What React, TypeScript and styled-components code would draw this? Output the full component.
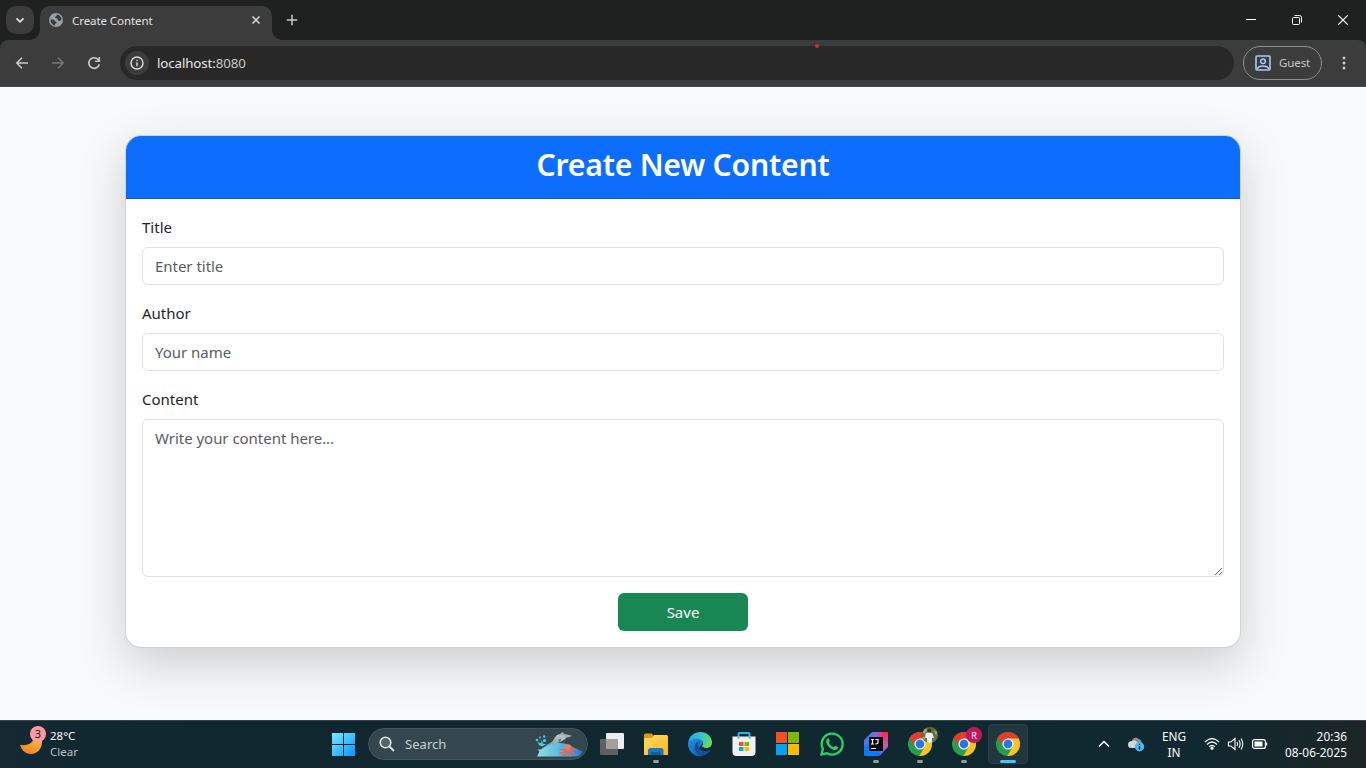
import React from "react";
import styled, { createGlobalStyle } from "styled-components";

const Global = createGlobalStyle`
  * { box-sizing: border-box; }
  body { margin: 0; overflow: hidden; font-family: "Noto Sans", "Open Sans", sans-serif; }
  svg { display: block; flex: none; overflow: visible; }
`;

const Screen = styled.div`
  width: 1366px;
  height: 768px;
  display: flex;
  flex-direction: column;
  overflow: hidden;
  background: #f8f9fa;
`;

/* browser window */
const TabStrip = styled.div`
  height: 40px;
  flex: none;
  display: flex;
  background: #1f2120;
  padding-left: 6px;
`;
const TabSearch = styled.div`
  width: 28px;
  height: 28px;
  margin-top: 6px;
  border-radius: 10px;
  background: #3c3c3c;
  display: grid;
  place-items: center;
`;
const Tab = styled.div`
  position: relative;
  width: 232px;
  height: 34px;
  margin: 6px 0 0 6px;
  padding: 0 9px 6px;
  border-radius: 10px 10px 0 0;
  background: #3c3c3c;
  display: flex;
  align-items: center;
  &::before, &::after {
    content: "";
    position: absolute;
    bottom: 0;
    width: 10px;
    height: 10px;
  }
  &::before { left: -10px; background: radial-gradient(circle at 0 0, transparent 9.5px, #3c3c3c 10px); }
  &::after { right: -10px; background: radial-gradient(circle at 100% 0, transparent 9.5px, #3c3c3c 10px); }
`;
const TabTitle = styled.span`
  flex: 1;
  margin-left: 9px;
  font-size: 11.5px;
  letter-spacing: -0.07px;
  color: #e3e3e3;
`;
const NewTab = styled.div`
  width: 40px;
  height: 40px;
  display: grid;
  place-items: center;
`;
const WindowButtons = styled.div`
  margin-left: auto;
  display: flex;
`;
const WindowButton = styled.div`
  width: 46px;
  height: 40px;
  display: grid;
  place-items: center;
`;
const Toolbar = styled.div`
  height: 47px;
  flex: none;
  display: flex;
  align-items: center;
  background: #3c3c3c;
  border-bottom: 1px solid #4a4a4a;
  border-radius: 8px 8px 0 0;
  padding-left: 4px;
`;
const ToolbarBack = styled.div`
  flex: none;
  background: #1f2120;
`;
const NavButton = styled.div`
  width: 36px;
  height: 36px;
  display: grid;
  place-items: center;
`;
const Omnibox = styled.div`
  position: relative;
  width: 1114px;
  height: 34px;
  margin-left: 8px;
  padding-left: 5px;
  border-radius: 17px;
  background: #282828;
  display: flex;
  align-items: center;
`;
const SiteInfo = styled.div`
  width: 24px;
  height: 24px;
  border-radius: 50%;
  background: #3c3c3c;
  display: grid;
  place-items: center;
`;
const Url = styled.span`
  margin-left: 8px;
  font-size: 13.3px;
  letter-spacing: -0.1px;
  color: #e8e8e8;
  span { color: #c7c7c7; }
`;
const RedDot = styled.i`
  position: absolute;
  left: 695px;
  top: -2px;
  width: 4px;
  height: 4px;
  border-radius: 50%;
  background: #d92626;
`;
const Guest = styled.div`
  width: 79px;
  height: 34px;
  margin-left: 9px;
  padding: 0 0 1px 11px;
  border: 1px solid #8e8e8e;
  border-radius: 17px;
  display: flex;
  align-items: center;
  gap: 8px;
  font-size: 11.5px;
  letter-spacing: -0.1px;
  color: #c7c7c7;
`;
const MenuButton = styled.div`
  width: 44px;
  display: grid;
  place-items: center;
`;

/* page */
const Page = styled.main`
  flex: 1;
  min-height: 0;
  overflow: hidden;
  background: #f8f9fa;
  padding-top: 48px;
`;
const Card = styled.section`
  width: 1116px;
  margin: 0 auto;
  border: 1px solid rgba(0, 0, 0, 0.175);
  border-radius: 16px;
  background: #fff;
  box-shadow: 0 16px 48px rgba(0, 0, 0, 0.175);
`;
const CardHeader = styled.header`
  height: 63px;
  padding-top: 9px;
  border-bottom: 1px solid rgba(0, 0, 0, 0.175);
  border-radius: 15px 15px 0 0;
  background: #0d6efd;
  text-align: center;
`;
const Heading = styled.h2`
  margin: 0;
  font-size: 30.2px;
  line-height: 40px;
  font-weight: 600;
  letter-spacing: -0.25px;
  color: #fff;
`;
const Form = styled.form`
  padding: 16px;
  display: flex;
  flex-direction: column;
  gap: 16px;
`;
const Field = styled.label`
  display: flex;
  flex-direction: column;
  gap: 8px;
  font-size: 15px;
  line-height: 24px;
  color: #212529;
`;
const control = `
  display: block;
  width: 100%;
  margin: 0;
  padding: 6px 12px;
  border: 1px solid #dee2e6;
  border-radius: 6px;
  background: #fff;
  font-family: inherit;
  font-size: 15px;
  line-height: 24px;
  letter-spacing: -0.03px;
  color: #212529;
  outline: none;
  &::placeholder { color: #595c5f; opacity: 1; }
`;
const Input = styled.input`
  ${control}
  height: 38px;
`;
const TextArea = styled.textarea`
  ${control}
  height: 158px;
  resize: vertical;
`;
const SaveButton = styled.button`
  align-self: center;
  width: 130px;
  height: 38px;
  padding: 0;
  border: 0;
  border-radius: 6px;
  background: #198754;
  color: #fff;
  font-family: inherit;
  font-size: 15px;
  line-height: 24px;
`;

/* taskbar */
const Taskbar = styled.footer`
  height: 48px;
  flex: none;
  display: flex;
  align-items: center;
  padding-bottom: 1px;
  background: linear-gradient(90deg, #142932 0%, #10272f 15%, #10282f 88%, #1d2627 100%);
  border-top: 1px solid #36474d;
`;
const Weather = styled.div`
  width: 321px;
  padding-left: 19px;
  display: flex;
  align-items: center;
  gap: 3px;
`;
const TwoLines = styled.div<{ $align?: string; $width?: number; $size?: number }>`
  width: ${(p) => (p.$width ? p.$width + "px" : "auto")};
  text-align: ${(p) => p.$align || "left"};
  font-size: ${(p) => p.$size || 11.5}px;
  line-height: 16px;
  white-space: nowrap;
  color: #fff;
`;
const Clock = styled(TwoLines)`
  letter-spacing: 0.05px;
`;
const Muted = styled.div`
  color: #b9c2c5;
`;
const AppCell = styled.div`
  position: relative;
  width: 44px;
  height: 46px;
  display: grid;
  place-items: center;
`;
const ActiveTile = styled.div`
  width: 40px;
  height: 40px;
  border-radius: 4px;
  border: 1px solid #2e4046;
  background: #22363d;
  display: grid;
  place-items: center;
`;
const Indicator = styled.i<{ $active?: boolean }>`
  position: absolute;
  bottom: 4px;
  left: ${(p) => (p.$active ? 14 : 19)}px;
  width: ${(p) => (p.$active ? 16 : 6)}px;
  height: 3px;
  border-radius: 2px;
  background: ${(p) => (p.$active ? "#4cc2f5" : "#949fa3")};
`;
const SearchBox = styled.div`
  width: 220px;
  height: 32px;
  margin: 0 2px 0 3px;
  padding: 0 3px 0 10px;
  border: 1px solid #43545b;
  border-radius: 16px;
  background: #34464e;
  display: flex;
  align-items: center;
  font-size: 13px;
  color: #c9d0d3;
  span { flex: 1; margin-left: 10px; letter-spacing: 0.05px; }
`;
const Badge = styled.div`
  position: absolute;
  right: 4px;
  top: 6px;
`;
const Tray = styled.div`
  margin-left: 66px;
  display: flex;
  align-items: center;
`;
const TrayCell = styled.div<{ $w: number }>`
  width: ${(p) => p.$w}px;
  display: grid;
  place-items: center;
`;
const StatusIcons = styled.div`
  width: 96px;
  padding-left: 16px;
  display: flex;
  align-items: center;
  gap: 7px;
`;

const Globe = () => (
  <svg width="14" height="14" viewBox="0 0 14 14">
    <circle cx="7" cy="7" r="7" fill="#9aa0a8" />
    <path d="M1.4 6.4H4C5.400 6.400 5.800 7.800 5.800 8.500H7.500V10.300L6 11V12.500C3.400 12 1.400 9.700 1.400 6.400ZM8.200 1.500C8 3 6.200 2.800 6.100 4.200 6 5.500 8 4.900 8.600 6.100 9 7.100 9 8 10.200 8 11.300 8 11.300 6.800 12.600 6.900 12.500 4.300 10.800 2 8.200 1.500Z" fill="#3c3c3c" />
  </svg>
);

const Chrome = ({ id }: { id: string }) => (
  <svg width="24" height="24" viewBox="0 0 24 24">
    <defs>
      <clipPath id={id}><circle cx="12" cy="12" r="12" /></clipPath>
    </defs>
    <g clipPath={`url(#${id})`}>
      <rect width="24" height="24" fill="#24a04b" />
      <path d="M1.600 5.800 7.150 14.800 12 12V6.400H24V0H0Z" fill="#e33b2e" />
      <path d="M12 6.400H24V24H11.300L16.850 14.800 12 12Z" fill="#fcc31e" />
    </g>
    <circle cx="12" cy="12" r="5.600" fill="#fff" />
    <circle cx="12" cy="12" r="4.400" fill="#2676e8" />
  </svg>
);

const Edge = () => (
  <svg width="24" height="24" viewBox="0 0 24 24">
    <defs>
      <linearGradient id="edgeTop" x1="0" y1="0.3" x2="1" y2="0.5">
        <stop offset="0" stopColor="#2aa9e4" /><stop offset="0.5" stopColor="#33c3cf" /><stop offset="1" stopColor="#6bdc52" />
      </linearGradient>
      <linearGradient id="edgeLeft" x1="0" y1="0" x2="0.7" y2="1">
        <stop offset="0" stopColor="#2396df" /><stop offset="1" stopColor="#1261ba" />
      </linearGradient>
    </defs>
    <path d="M0 12C0 7.500 4 5 8.500 5 13 5 15.200 8 15 11L10 17 15 24C6 26 0 19 0 12Z" fill="url(#edgeLeft)" />
    <path d="M.3 10C1.500 3.800 6.300 0 12.300 0 19 0 24 4.900 24 10.400c0 3.300-2.500 5.500-5.600 5.500-2.600 0-4.300-.9-4.300-1.800 0-.7 1-1 1-2.800 0-2.500-2.800-4.600-6.400-4.600C4.800 6.700 1.600 8 .3 10Z" fill="url(#edgeTop)" />
    <path d="M11 9.200C7.600 10.800 5.600 14.500 7.300 18.500 8.800 22 12 24 15 23.600 18 23 20.800 21.200 22.300 18.500 22.500 18 22 17.700 21.500 18 17.500 20 13.500 18.800 11.500 16.200 9.800 14 9.700 11 11 9.200Z" fill="#114f96" />
  </svg>
);

const FourSquares = ({ colors }: { colors: string[] }) => (
  <svg width="24" height="24">
    {colors.map((c, i) => (
      <rect key={i} x={(i % 2) * 12} y={Math.floor(i / 2) * 12} width="11" height="11" fill={c} />
    ))}
  </svg>
);

const WindowsLogo = () => (
  <svg width="24" height="24" viewBox="0 0 24 24">
    <defs>
      <linearGradient id="win" gradientUnits="userSpaceOnUse" x1="1" y1="0" x2="23" y2="24">
        <stop offset="0" stopColor="#7aebff" /><stop offset="1" stopColor="#0998fb" />
      </linearGradient>
    </defs>
    <path d="M1 1H12V12H1ZM13 1H24V12H13ZM1 13H12V24H1ZM13 13H24V24H13Z" fill="url(#win)" />
  </svg>
);

const SearchArt = () => (
  <svg width="50" height="26" viewBox="0 0 50 26">
    <defs>
      <linearGradient id="sea" x1="0" x2="1"><stop offset="0" stopColor="#8fe0e2" /><stop offset=".6" stopColor="#4cb2dc" /><stop offset="1" stopColor="#2f74cf" /></linearGradient>
      <linearGradient id="dolphin" x1="0" y1="1" x2="1" y2="0"><stop offset="0" stopColor="#7d989f" /><stop offset=".6" stopColor="#b9c1c2" /><stop offset="1" stopColor="#84949a" /></linearGradient>
    </defs>
    <path d="M3 25.500 5.500 20.500 3.500 18.500 7 18.500C12 14 18 11.500 24 11.700 30 12 36 13.500 39 16L48.500 20.500C47 23.500 45 25.500 42 25.500Z" fill="url(#sea)" />
    <path d="M11 13.500C16 13.500 19 10.500 20.500 7 21.500 4.500 24 3.500 25.500 3.200L29 1 30 3C32.500 3 34 4 37.500 4.500 37 6 34.500 6.300 32.500 6.500 31 9 27 11 22 12.300 18 13.500 14 14.200 11 13.500Z" fill="url(#dolphin)" />
    <path d="M24 8.500 27.500 7.500 25.500 11.500Z" fill="#61797f" />
    <g fill="#52c6df">
      <circle cx="3" cy="9" r="1.300" /><circle cx="6" cy="6.500" r="1" /><circle cx="10.200" cy="5.500" r="1.200" /><circle cx="10.500" cy="9.500" r="1.600" />
      <path d="M3.500 11 7 12 8 9 9 12.500 12 13.500 8 15.500 5 14Z" />
    </g>
    <circle cx="34" cy="16.500" r="3.200" fill="#f47c58" />
    <g fill="none" stroke="#ea6551" strokeWidth="1.500" strokeLinecap="round">
      <path d="M32.500 19C30 17.500 28.500 20 26 18M32.500 20.500C29.500 20 29 23 26 22M34 20C33 23 31 24.500 28.500 24.500M35 20C36 23 34 24.500 36 25M36 19C39 20 38 23 41 23.500M36.500 18C39 17 40 20 42 18.500" />
    </g>
  </svg>
);

const Moon = () => (
  <svg width="28" height="32" viewBox="0 0 28 32">
    <defs><linearGradient id="moon" x1="1" y1="0" x2="0.3" y2="1"><stop offset="0" stopColor="#ffc14c" /><stop offset="1" stopColor="#ef8424" /></linearGradient></defs>
    <path d="M14 8C16 14 10 18 1 17 3 23 7 26 12 26 18 26 23 21 23 14V8Z" fill="url(#moon)" />
    <circle cx="19" cy="6" r="8" fill="#ff99a4" />
    <text x="19" y="10" textAnchor="middle" fontSize="11" fill="#1b1b1b">3</text>
  </svg>
);

const Explorer = () => (
  <svg width="26" height="24" viewBox="0 0 26 24">
    <defs>
      <linearGradient id="fold" x1="0" y1="0" x2="1" y2="1"><stop offset="0" stopColor="#ffdc6d" /><stop offset="1" stopColor="#fbb80f" /></linearGradient>
      <linearGradient id="pocket" x1="0" y1="0" x2="0" y2="1"><stop offset="0" stopColor="#1979c8" /><stop offset="1" stopColor="#1d6fb8" /></linearGradient>
    </defs>
    <path d="M1 3Q1 1.500 2.500 1.500H8.500L11 4V8H1Z" fill="#e09a05" />
    <path d="M1 6H9L11 3H23.500Q25 3 25 4.500V23H1Z" fill="url(#fold)" />
    <path d="M5 23V18.500Q5 16 7.500 16H18Q20.500 16 20.500 18.500V23Z" fill="url(#pocket)" />
    <path d="M8 23V20H17.500V23Z" fill="#145c9f" />
  </svg>
);

const Store = () => (
  <svg width="24" height="26" viewBox="0 0 24 26">
    <path d="M6.500 7V3Q6.500 2 7.500 2H16.500Q17.500 2 17.500 3V7" fill="none" stroke="#2ab4ea" strokeWidth="2" />
    <path d="M.5 5.500H23.500V21Q23.500 25 19.500 25H4.500Q.5 25 .5 21Z" fill="#f1f1f1" />
    <path d="M6.500 5.500V7.500M17.500 5.500V7.500" stroke="#2ab4ea" strokeWidth="2" />
    <rect x="7" y="11" width="4.500" height="4" fill="#f25022" /><rect x="12.500" y="11" width="4.500" height="4" fill="#7fba00" />
    <rect x="7" y="16" width="4.500" height="4" fill="#00a4ef" /><rect x="12.500" y="16" width="4.500" height="4" fill="#ffb900" />
  </svg>
);

const WhatsApp = () => (
  <svg width="24" height="24" viewBox="0 0 24 24">
    <path d="M1.300 22.700 2.900 17A10.500 10.500 0 1 1 7 21.200Z" fill="none" stroke="#25d366" strokeWidth="2.300" strokeLinejoin="round" />
    <path d="M8.600 6.200 9.800 8.800C9.900 9.700 9 10.100 8.900 10.700 10 13 11.700 14.300 13.700 15.100 14.500 14.900 14.900 13.900 15.500 13.700L18 15C18.200 17 16.400 18.100 15 18 10.500 17.500 6.600 13.600 6.200 9.500 6.200 7.500 7.400 6 8.600 6.200Z" fill="#25d366" />
  </svg>
);

const IntelliJ = () => (
  <svg width="24" height="24" viewBox="0 0 24 24">
    <defs>
      <linearGradient id="ijRight" gradientUnits="userSpaceOnUse" x1="20" y1="2" x2="17" y2="24">
        <stop offset="0" stopColor="#fe2857" /><stop offset=".45" stopColor="#c0609c" /><stop offset="1" stopColor="#3f6df0" />
      </linearGradient>
      <linearGradient id="ijTop" gradientUnits="userSpaceOnUse" x1="2" y1="4" x2="20" y2="4">
        <stop offset="0" stopColor="#3a7af2" /><stop offset=".5" stopColor="#7a6be0" /><stop offset="1" stopColor="#fe2f63" />
      </linearGradient>
    </defs>
    <path d="M0 9 5 5H19V19L15 24H1Q0 24 0 23Z" fill="#087cfa" />
    <path d="M0 10V9Q0 8 .8 7.200L7 1Q8 0 9 0H20V7H5V12L0 15Z" fill="url(#ijTop)" />
    <path d="M18 0H23Q24 0 24 1V14Q24 15 23.300 15.700L15.500 24 16 18H19V5Z" fill="url(#ijRight)" />
    <rect x="5" y="5" width="14" height="14" fill="#050505" />
    <path d="M7 7.500H10M8.500 7.500V12M7 12H10M11.500 7.500H14V10.500Q14 12 11.500 11.800M7 16.500H12" stroke="#fff" strokeWidth="1.200" fill="none" />
  </svg>
);

const Avatar = () => (
  <svg width="16" height="16" viewBox="0 0 16 16">
    <defs><clipPath id="face"><circle cx="8" cy="8" r="8" /></clipPath></defs>
    <g clipPath="url(#face)">
      <rect width="16" height="16" fill="#5d7040" />
      <path d="M1 4 4 1 5 4 2 7ZM12 3 15 5 14 9ZM0 10H3V13Z" fill="#a3a878" />
      <path d="M3.500 6.500Q7 4.500 10.500 6.500L12 11 10 11V16H5V11L3 11Z" fill="#eef0ef" />
      <circle cx="7.300" cy="3.600" r="2" fill="#3c2c24" />
    </g>
  </svg>
);

const App = () => (
  <Screen>
    <Global />
    <TabStrip>
      <TabSearch>
        <svg width="10" height="10" viewBox="0 0 10 10"><path d="M1.500 3.300 5 6.800 8.500 3.300" fill="none" stroke="#e3e3e3" strokeWidth="1.700" /></svg>
      </TabSearch>
      <Tab>
        <Globe />
        <TabTitle>Create Content</TabTitle>
        <svg width="14" height="10" viewBox="0 0 14 10"><path d="M3.500 1.500 10.500 8.500M10.500 1.500 3.500 8.500" stroke="#dedede" strokeWidth="1.500" /></svg>
      </Tab>
      <NewTab>
        <svg width="12" height="12" viewBox="0 0 12 12"><path d="M6 .7V11.300M.7 6H11.300" stroke="#c7c7c7" strokeWidth="1.500" /></svg>
      </NewTab>
      <WindowButtons>
        <WindowButton><svg width="10" height="10"><path d="M0 4.500H10" stroke="#fff" /></svg></WindowButton>
        <WindowButton>
          <svg width="10" height="10" viewBox="0 0 10 10"><rect x=".5" y="2.500" width="7" height="7" rx="1" fill="none" stroke="#fff" /><path d="M2.500.5H7.500Q9.500.5 9.500 2.500V7.500" fill="none" stroke="#fff" /></svg>
        </WindowButton>
        <WindowButton><svg width="10" height="10"><path d="M.3.3 9.700 9.700M9.700.3.3 9.700" stroke="#fff" strokeWidth="1.200" /></svg></WindowButton>
      </WindowButtons>
    </TabStrip>
    <ToolbarBack>
      <Toolbar>
        <NavButton><svg width="14" height="14" viewBox="0 0 14 14"><path d="M13 7H1.800M7 1.800 1.800 7 7 12.200" fill="none" stroke="#c7c7c7" strokeWidth="1.600" /></svg></NavButton>
        <NavButton><svg width="14" height="14" viewBox="0 0 14 14"><path d="M1 7H12.200M7 1.800 12.200 7 7 12.200" fill="none" stroke="#757575" strokeWidth="1.600" /></svg></NavButton>
        <NavButton>
          <svg width="14" height="14" viewBox="0 0 14 14"><path d="M12.300 8.200A5.300 5.300 0 1 1 11.200 3.600L12.300 4.800" fill="none" stroke="#c7c7c7" strokeWidth="1.600" /><path d="M12.300 1V5.300H8" fill="none" stroke="#c7c7c7" strokeWidth="1.600" /></svg>
        </NavButton>
        <Omnibox>
          <SiteInfo>
            <svg width="14" height="14" viewBox="0 0 14 14"><circle cx="7" cy="7" r="6" fill="none" stroke="#dcdcdc" strokeWidth="1.400" /><path d="M7 6.200V10.300M7 3.700V5" stroke="#dcdcdc" strokeWidth="1.400" /></svg>
          </SiteInfo>
          <Url>localhost:<span>8080</span></Url>
          <RedDot />
        </Omnibox>
        <Guest>
          <svg width="16" height="16" viewBox="0 0 16 16"><rect x="1" y="1" width="14" height="14" rx="1" fill="none" stroke="#a8c7fa" strokeWidth="1.600" /><circle cx="8" cy="6.200" r="2.300" fill="none" stroke="#a8c7fa" strokeWidth="1.500" /><path d="M2 14Q3.500 11 8 11T14 14" fill="none" stroke="#a8c7fa" strokeWidth="1.500" /></svg>
          Guest
        </Guest>
        <MenuButton>
          <svg width="4" height="16" viewBox="0 0 4 16" fill="#c7c7c7"><circle cx="2" cy="3" r="1.500" /><circle cx="2" cy="8" r="1.500" /><circle cx="2" cy="13" r="1.500" /></svg>
        </MenuButton>
      </Toolbar>
    </ToolbarBack>

    <Page>
      <Card>
        <CardHeader><Heading>Create New Content</Heading></CardHeader>
        <Form>
          <Field>Title<Input placeholder="Enter title" /></Field>
          <Field>Author<Input placeholder="Your name" /></Field>
          <Field>Content<TextArea placeholder="Write your content here..." /></Field>
          <SaveButton type="button">Save</SaveButton>
        </Form>
      </Card>
    </Page>

    <Taskbar>
      <Weather>
        <Moon />
        <TwoLines>28°C<Muted>Clear</Muted></TwoLines>
      </Weather>
      <AppCell><WindowsLogo /></AppCell>
      <SearchBox>
        <svg width="16" height="16" viewBox="0 0 16 16"><circle cx="6.500" cy="6.500" r="5.300" fill="#53646b" stroke="#e4e8e9" strokeWidth="1.600" /><path d="M10.500 10.500 15 15" stroke="#e4e8e9" strokeWidth="1.800" /></svg>
        <span>Search</span>
        <SearchArt />
      </SearchBox>
      <AppCell>
        <svg width="24" height="24" viewBox="0 0 24 24"><rect x="6" y="1" width="18" height="16" rx="1" fill="#ededed" /><rect x="0" y="7" width="18" height="16" rx="1" fill="#5e6061" /><rect x="6" y="7" width="12" height="10" fill="#a0a0a0" /></svg>
      </AppCell>
      <AppCell><Explorer /><Indicator /></AppCell>
      <AppCell><Edge /></AppCell>
      <AppCell><Store /></AppCell>
      <AppCell><FourSquares colors={["#f25022", "#7fba00", "#00a4ef", "#ffb900"]} /></AppCell>
      <AppCell><WhatsApp /></AppCell>
      <AppCell><IntelliJ /><Indicator /></AppCell>
      <AppCell><Chrome id="chromeA" /><Badge><Avatar /></Badge><Indicator /></AppCell>
      <AppCell>
        <Chrome id="chromeB" />
        <Badge><svg width="16" height="16"><circle cx="8" cy="8" r="8" fill="#c2185b" /><text x="8" y="11.500" textAnchor="middle" fontSize="9" fill="#fff">R</text></svg></Badge>
        <Indicator />
      </AppCell>
      <AppCell><ActiveTile><Chrome id="chromeC" /></ActiveTile><Indicator $active /></AppCell>
      <Tray>
        <TrayCell $w={16}><svg width="12" height="8"><path d="M1 6.500 6 1.500 11 6.500" fill="none" stroke="#fff" strokeWidth="1.500" /></svg></TrayCell>
        <TrayCell $w={48}>
          <svg width="18" height="16" viewBox="0 0 18 16">
            <path d="M5 4Q8-.5 12 3 15 4 14.500 8H5Z" fill="#8b8f91" /><path d="M1 8.500Q1 5 5 5 8 3 10 6L13 8V12H4Q1 12 1 8.500Z" fill="#d2d4d5" />
            <circle cx="12.500" cy="10.800" r="4.700" fill="#4cb9f2" /><path d="M12.500 10V13.500M12.500 7.700V9" stroke="#0b2a3b" strokeWidth="1.400" />
          </svg>
        </TrayCell>
        <TwoLines $width={28} $align="center" $size={11.8}>ENG<div>IN</div></TwoLines>
        <StatusIcons>
          <svg width="16" height="14" viewBox="0 0 16 14" fill="none" stroke="#fff" strokeWidth="1.200"><path d="M.8 5.200Q8-2 15.200 5.200M3 7.500Q8 2.500 13 7.500M5.200 9.700Q8 7 10.800 9.700" /><circle cx="8" cy="11.200" r="1" fill="#fff" /></svg>
          <svg width="18" height="14" viewBox="0 0 18 14" fill="none" stroke="#fff" strokeWidth="1.100"><path d="M1.500 5H4L8 1.500V12.500L4 9H1.500ZM10 5Q11.300 7 10 9M12 3.300Q14.300 7 12 10.700M14 1.500Q17.600 7 14 12.500" /></svg>
          <svg width="17" height="12" viewBox="0 0 17 12"><rect x=".6" y="1.600" width="12.800" height="8.800" rx="2" fill="none" stroke="#fff" strokeWidth="1.200" /><rect x="2.500" y="3.500" width="8" height="5" fill="#fff" /><path d="M14.500 4.500V7.500" stroke="#fff" strokeWidth="1.500" /></svg>
        </StatusIcons>
        <Clock $width={63} $align="right" $size={11.8}>20:36<div>08-06-2025</div></Clock>
      </Tray>
    </Taskbar>
  </Screen>
);

export default App;
